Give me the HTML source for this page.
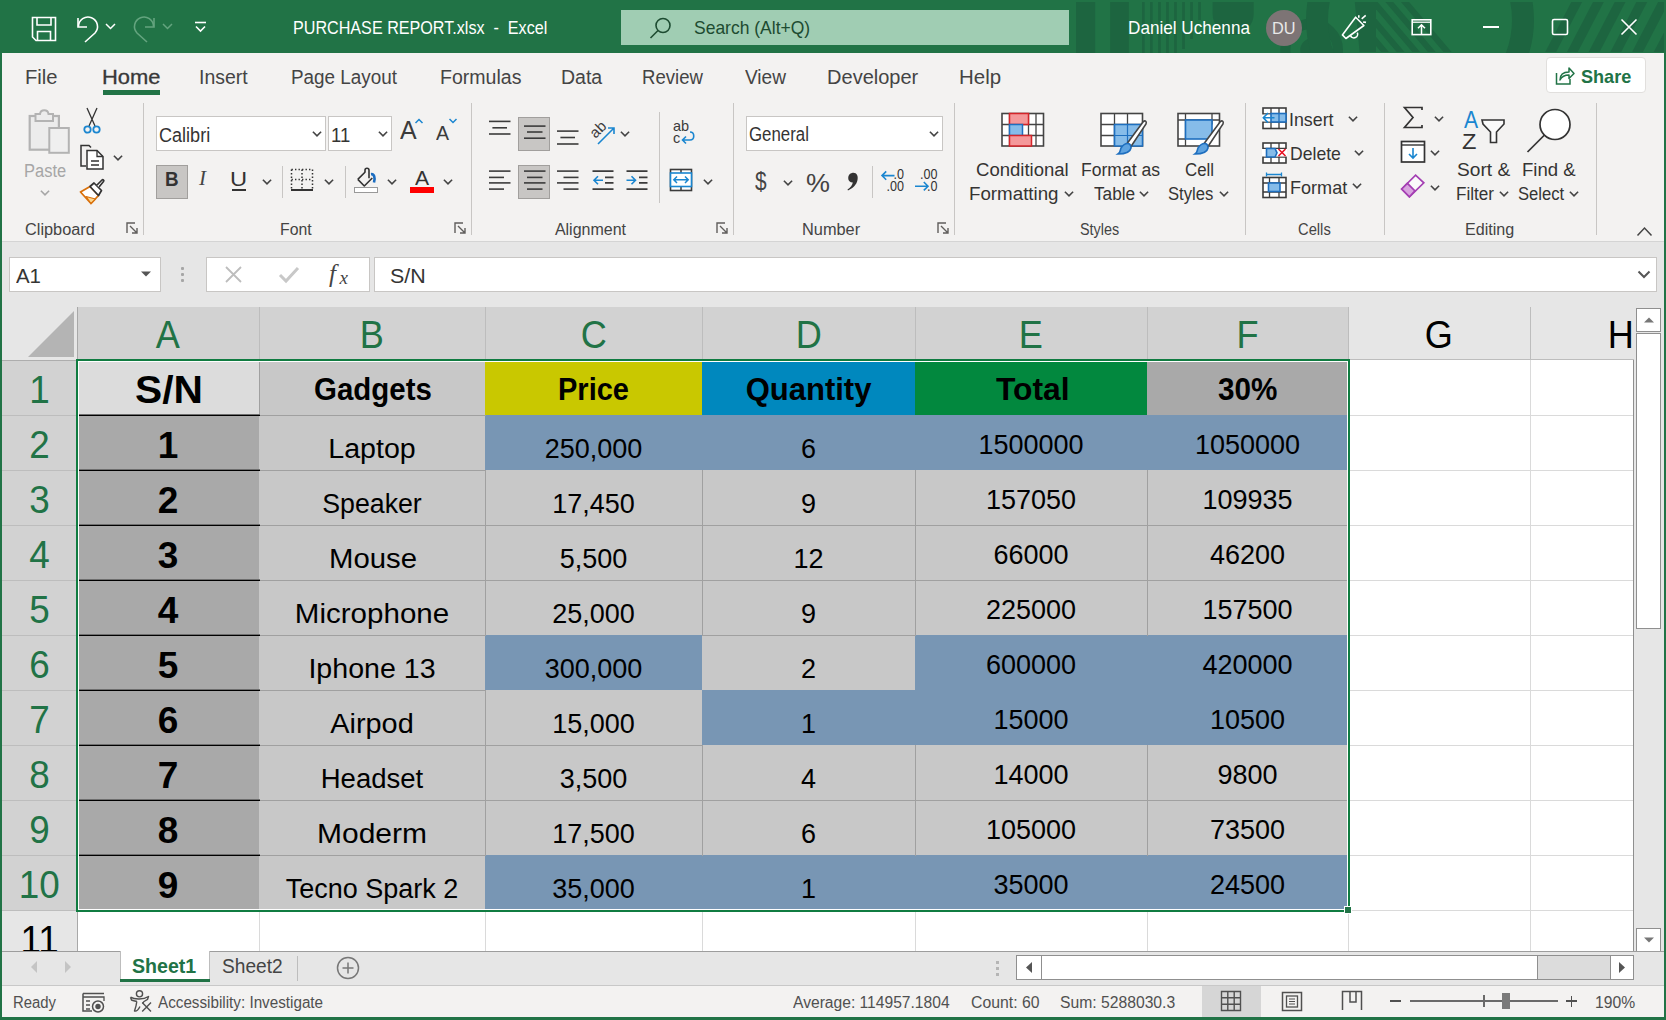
<!DOCTYPE html><html><head><meta charset="utf-8"><style>
*{margin:0;padding:0;box-sizing:border-box}
html,body{width:1666px;height:1020px;overflow:hidden;background:#f3f2f1;font-family:"Liberation Sans",sans-serif;color:#262626}
.ab{position:absolute}
.t{position:absolute;white-space:nowrap;line-height:1}
svg{position:absolute;overflow:visible}
</style></head><body>

<div class="ab" style="left:0;top:0;width:1666px;height:53px;background:#217346"></div>
<div class="ab" style="left:0;top:0;width:2px;height:1020px;background:#217346"></div>
<div class="ab" style="left:1664px;top:0;width:2px;height:1020px;background:#217346"></div>
<div class="ab" style="left:0;top:1017px;width:1666px;height:3px;background:#217346"></div>
<div class="ab" style="left:2px;top:241px;width:1662px;height:66px;background:#e6e6e6;border-top:1px solid #d4d4d4"></div>
<div style="position:absolute;left:0;top:0;width:1634px;height:951px;overflow:hidden">
<div class="ab" style="left:2px;top:307px;width:1634px;height:644px;background:#fff"></div>
<div class="ab" style="left:2px;top:307px;width:75px;height:53px;background:#e6e6e6"></div>
<svg style="left:0;top:0" width="1666" height="1020"><polygon points="28,357 74,311 74,357" fill="#b4b4b4"/></svg>
<div class="ab" style="left:259px;top:307px;width:1px;height:644px;background:#dadada"></div>
<div class="ab" style="left:485px;top:307px;width:1px;height:644px;background:#dadada"></div>
<div class="ab" style="left:702px;top:307px;width:1px;height:644px;background:#dadada"></div>
<div class="ab" style="left:915px;top:307px;width:1px;height:644px;background:#dadada"></div>
<div class="ab" style="left:1147px;top:307px;width:1px;height:644px;background:#dadada"></div>
<div class="ab" style="left:1348px;top:307px;width:1px;height:644px;background:#dadada"></div>
<div class="ab" style="left:1530px;top:307px;width:1px;height:644px;background:#dadada"></div>
<div class="ab" style="left:77px;top:415px;width:1557px;height:1px;background:#dadada"></div>
<div class="ab" style="left:77px;top:470px;width:1557px;height:1px;background:#dadada"></div>
<div class="ab" style="left:77px;top:525px;width:1557px;height:1px;background:#dadada"></div>
<div class="ab" style="left:77px;top:580px;width:1557px;height:1px;background:#dadada"></div>
<div class="ab" style="left:77px;top:635px;width:1557px;height:1px;background:#dadada"></div>
<div class="ab" style="left:77px;top:690px;width:1557px;height:1px;background:#dadada"></div>
<div class="ab" style="left:77px;top:745px;width:1557px;height:1px;background:#dadada"></div>
<div class="ab" style="left:77px;top:800px;width:1557px;height:1px;background:#dadada"></div>
<div class="ab" style="left:77px;top:855px;width:1557px;height:1px;background:#dadada"></div>
<div class="ab" style="left:77px;top:910px;width:1557px;height:1px;background:#dadada"></div>
<div class="ab" style="left:78px;top:307px;width:181px;height:53px;background:#d2d2d2"></div>
<div class="ab" style="left:259px;top:307px;width:1px;height:53px;background:#bdbdbd"></div>
<div class="t" style="left:77px;top:307px;width:182px;height:53px;line-height:57px;text-align:center;font-size:38px;color:#217346"><span style="display:inline-block;transform:scaleX(0.95)">A</span></div>
<div class="ab" style="left:260px;top:307px;width:225px;height:53px;background:#d2d2d2"></div>
<div class="ab" style="left:485px;top:307px;width:1px;height:53px;background:#bdbdbd"></div>
<div class="t" style="left:259px;top:307px;width:226px;height:53px;line-height:57px;text-align:center;font-size:38px;color:#217346"><span style="display:inline-block;transform:scaleX(0.95)">B</span></div>
<div class="ab" style="left:486px;top:307px;width:216px;height:53px;background:#d2d2d2"></div>
<div class="ab" style="left:702px;top:307px;width:1px;height:53px;background:#bdbdbd"></div>
<div class="t" style="left:485px;top:307px;width:217px;height:53px;line-height:57px;text-align:center;font-size:38px;color:#217346"><span style="display:inline-block;transform:scaleX(0.95)">C</span></div>
<div class="ab" style="left:703px;top:307px;width:212px;height:53px;background:#d2d2d2"></div>
<div class="ab" style="left:915px;top:307px;width:1px;height:53px;background:#bdbdbd"></div>
<div class="t" style="left:702px;top:307px;width:213px;height:53px;line-height:57px;text-align:center;font-size:38px;color:#217346"><span style="display:inline-block;transform:scaleX(0.95)">D</span></div>
<div class="ab" style="left:916px;top:307px;width:231px;height:53px;background:#d2d2d2"></div>
<div class="ab" style="left:1147px;top:307px;width:1px;height:53px;background:#bdbdbd"></div>
<div class="t" style="left:915px;top:307px;width:232px;height:53px;line-height:57px;text-align:center;font-size:38px;color:#217346"><span style="display:inline-block;transform:scaleX(0.95)">E</span></div>
<div class="ab" style="left:1148px;top:307px;width:200px;height:53px;background:#d2d2d2"></div>
<div class="ab" style="left:1348px;top:307px;width:1px;height:53px;background:#bdbdbd"></div>
<div class="t" style="left:1147px;top:307px;width:201px;height:53px;line-height:57px;text-align:center;font-size:38px;color:#217346"><span style="display:inline-block;transform:scaleX(0.95)">F</span></div>
<div class="ab" style="left:1349px;top:307px;width:181px;height:53px;background:#e6e6e6"></div>
<div class="ab" style="left:1530px;top:307px;width:1px;height:53px;background:#bdbdbd"></div>
<div class="t" style="left:1348px;top:307px;width:182px;height:53px;line-height:57px;text-align:center;font-size:38px;color:#000"><span style="display:inline-block;transform:scaleX(0.95)">G</span></div>
<div class="ab" style="left:1531px;top:307px;width:181px;height:53px;background:#e6e6e6"></div>
<div class="ab" style="left:1712px;top:307px;width:1px;height:53px;background:#bdbdbd"></div>
<div class="t" style="left:1530px;top:307px;width:182px;height:53px;line-height:57px;text-align:center;font-size:38px;color:#000"><span style="display:inline-block;transform:scaleX(0.95)">H</span></div>
<div class="ab" style="left:77px;top:359px;width:1557px;height:1px;background:#bdbdbd"></div>
<div class="ab" style="left:2px;top:361px;width:75px;height:54px;background:#d2d2d2"></div>
<div class="ab" style="left:2px;top:415px;width:75px;height:1px;background:#bdbdbd"></div>
<div class="t" style="left:2px;top:360px;width:75px;height:55px;line-height:61px;text-align:center;font-size:38px;color:#217346"><span style="display:inline-block;transform:scaleX(0.97)">1</span></div>
<div class="ab" style="left:2px;top:416px;width:75px;height:54px;background:#d2d2d2"></div>
<div class="ab" style="left:2px;top:470px;width:75px;height:1px;background:#bdbdbd"></div>
<div class="t" style="left:2px;top:415px;width:75px;height:55px;line-height:61px;text-align:center;font-size:38px;color:#217346"><span style="display:inline-block;transform:scaleX(0.97)">2</span></div>
<div class="ab" style="left:2px;top:471px;width:75px;height:54px;background:#d2d2d2"></div>
<div class="ab" style="left:2px;top:525px;width:75px;height:1px;background:#bdbdbd"></div>
<div class="t" style="left:2px;top:470px;width:75px;height:55px;line-height:61px;text-align:center;font-size:38px;color:#217346"><span style="display:inline-block;transform:scaleX(0.97)">3</span></div>
<div class="ab" style="left:2px;top:526px;width:75px;height:54px;background:#d2d2d2"></div>
<div class="ab" style="left:2px;top:580px;width:75px;height:1px;background:#bdbdbd"></div>
<div class="t" style="left:2px;top:525px;width:75px;height:55px;line-height:61px;text-align:center;font-size:38px;color:#217346"><span style="display:inline-block;transform:scaleX(0.97)">4</span></div>
<div class="ab" style="left:2px;top:581px;width:75px;height:54px;background:#d2d2d2"></div>
<div class="ab" style="left:2px;top:635px;width:75px;height:1px;background:#bdbdbd"></div>
<div class="t" style="left:2px;top:580px;width:75px;height:55px;line-height:61px;text-align:center;font-size:38px;color:#217346"><span style="display:inline-block;transform:scaleX(0.97)">5</span></div>
<div class="ab" style="left:2px;top:636px;width:75px;height:54px;background:#d2d2d2"></div>
<div class="ab" style="left:2px;top:690px;width:75px;height:1px;background:#bdbdbd"></div>
<div class="t" style="left:2px;top:635px;width:75px;height:55px;line-height:61px;text-align:center;font-size:38px;color:#217346"><span style="display:inline-block;transform:scaleX(0.97)">6</span></div>
<div class="ab" style="left:2px;top:691px;width:75px;height:54px;background:#d2d2d2"></div>
<div class="ab" style="left:2px;top:745px;width:75px;height:1px;background:#bdbdbd"></div>
<div class="t" style="left:2px;top:690px;width:75px;height:55px;line-height:61px;text-align:center;font-size:38px;color:#217346"><span style="display:inline-block;transform:scaleX(0.97)">7</span></div>
<div class="ab" style="left:2px;top:746px;width:75px;height:54px;background:#d2d2d2"></div>
<div class="ab" style="left:2px;top:800px;width:75px;height:1px;background:#bdbdbd"></div>
<div class="t" style="left:2px;top:745px;width:75px;height:55px;line-height:61px;text-align:center;font-size:38px;color:#217346"><span style="display:inline-block;transform:scaleX(0.97)">8</span></div>
<div class="ab" style="left:2px;top:801px;width:75px;height:54px;background:#d2d2d2"></div>
<div class="ab" style="left:2px;top:855px;width:75px;height:1px;background:#bdbdbd"></div>
<div class="t" style="left:2px;top:800px;width:75px;height:55px;line-height:61px;text-align:center;font-size:38px;color:#217346"><span style="display:inline-block;transform:scaleX(0.97)">9</span></div>
<div class="ab" style="left:2px;top:856px;width:75px;height:54px;background:#d2d2d2"></div>
<div class="ab" style="left:2px;top:910px;width:75px;height:1px;background:#bdbdbd"></div>
<div class="t" style="left:2px;top:855px;width:75px;height:55px;line-height:61px;text-align:center;font-size:38px;color:#217346"><span style="display:inline-block;transform:scaleX(0.97)">10</span></div>
<div class="ab" style="left:2px;top:911px;width:75px;height:40px;background:#e6e6e6"></div>
<div class="ab" style="left:2px;top:965px;width:75px;height:1px;background:#bdbdbd"></div>
<div class="t" style="left:2px;top:910px;width:75px;height:55px;line-height:61px;text-align:center;font-size:38px;color:#000"><span style="display:inline-block;transform:scaleX(0.97)">11</span></div>
<div class="ab" style="left:77px;top:307px;width:1px;height:644px;background:#a8a8a8"></div>
<div class="ab" style="left:2px;top:360px;width:75px;height:1px;background:#adadad"></div>
<div class="ab" style="left:77px;top:360px;width:183px;height:56px;background:#dcdcdc"></div>
<div class="ab" style="left:259px;top:360px;width:227px;height:56px;background:#c8c8c8"></div>
<div class="ab" style="left:485px;top:360px;width:218px;height:56px;background:#c9c800"></div>
<div class="ab" style="left:702px;top:360px;width:214px;height:56px;background:#0088be"></div>
<div class="ab" style="left:915px;top:360px;width:233px;height:56px;background:#02883e"></div>
<div class="ab" style="left:1147px;top:360px;width:202px;height:56px;background:#a9a9a9"></div>
<div class="ab" style="left:77px;top:415px;width:183px;height:56px;background:#a9a9a9"></div>
<div class="ab" style="left:259px;top:415px;width:227px;height:56px;background:#c8c8c8"></div>
<div class="ab" style="left:485px;top:415px;width:218px;height:56px;background:#7896b4"></div>
<div class="ab" style="left:702px;top:415px;width:214px;height:56px;background:#7896b4"></div>
<div class="ab" style="left:915px;top:415px;width:233px;height:56px;background:#7896b4"></div>
<div class="ab" style="left:1147px;top:415px;width:202px;height:56px;background:#7896b4"></div>
<div class="ab" style="left:77px;top:470px;width:183px;height:56px;background:#a9a9a9"></div>
<div class="ab" style="left:259px;top:470px;width:227px;height:56px;background:#c8c8c8"></div>
<div class="ab" style="left:485px;top:470px;width:218px;height:56px;background:#c8c8c8"></div>
<div class="ab" style="left:702px;top:470px;width:214px;height:56px;background:#c8c8c8"></div>
<div class="ab" style="left:915px;top:470px;width:233px;height:56px;background:#c8c8c8"></div>
<div class="ab" style="left:1147px;top:470px;width:202px;height:56px;background:#c8c8c8"></div>
<div class="ab" style="left:77px;top:525px;width:183px;height:56px;background:#a9a9a9"></div>
<div class="ab" style="left:259px;top:525px;width:227px;height:56px;background:#c8c8c8"></div>
<div class="ab" style="left:485px;top:525px;width:218px;height:56px;background:#c8c8c8"></div>
<div class="ab" style="left:702px;top:525px;width:214px;height:56px;background:#c8c8c8"></div>
<div class="ab" style="left:915px;top:525px;width:233px;height:56px;background:#c8c8c8"></div>
<div class="ab" style="left:1147px;top:525px;width:202px;height:56px;background:#c8c8c8"></div>
<div class="ab" style="left:77px;top:580px;width:183px;height:56px;background:#a9a9a9"></div>
<div class="ab" style="left:259px;top:580px;width:227px;height:56px;background:#c8c8c8"></div>
<div class="ab" style="left:485px;top:580px;width:218px;height:56px;background:#c8c8c8"></div>
<div class="ab" style="left:702px;top:580px;width:214px;height:56px;background:#c8c8c8"></div>
<div class="ab" style="left:915px;top:580px;width:233px;height:56px;background:#c8c8c8"></div>
<div class="ab" style="left:1147px;top:580px;width:202px;height:56px;background:#c8c8c8"></div>
<div class="ab" style="left:77px;top:635px;width:183px;height:56px;background:#a9a9a9"></div>
<div class="ab" style="left:259px;top:635px;width:227px;height:56px;background:#c8c8c8"></div>
<div class="ab" style="left:485px;top:635px;width:218px;height:56px;background:#7896b4"></div>
<div class="ab" style="left:702px;top:635px;width:214px;height:56px;background:#c8c8c8"></div>
<div class="ab" style="left:915px;top:635px;width:233px;height:56px;background:#7896b4"></div>
<div class="ab" style="left:1147px;top:635px;width:202px;height:56px;background:#7896b4"></div>
<div class="ab" style="left:77px;top:690px;width:183px;height:56px;background:#a9a9a9"></div>
<div class="ab" style="left:259px;top:690px;width:227px;height:56px;background:#c8c8c8"></div>
<div class="ab" style="left:485px;top:690px;width:218px;height:56px;background:#c8c8c8"></div>
<div class="ab" style="left:702px;top:690px;width:214px;height:56px;background:#7896b4"></div>
<div class="ab" style="left:915px;top:690px;width:233px;height:56px;background:#7896b4"></div>
<div class="ab" style="left:1147px;top:690px;width:202px;height:56px;background:#7896b4"></div>
<div class="ab" style="left:77px;top:745px;width:183px;height:56px;background:#a9a9a9"></div>
<div class="ab" style="left:259px;top:745px;width:227px;height:56px;background:#c8c8c8"></div>
<div class="ab" style="left:485px;top:745px;width:218px;height:56px;background:#c8c8c8"></div>
<div class="ab" style="left:702px;top:745px;width:214px;height:56px;background:#c8c8c8"></div>
<div class="ab" style="left:915px;top:745px;width:233px;height:56px;background:#c8c8c8"></div>
<div class="ab" style="left:1147px;top:745px;width:202px;height:56px;background:#c8c8c8"></div>
<div class="ab" style="left:77px;top:800px;width:183px;height:56px;background:#a9a9a9"></div>
<div class="ab" style="left:259px;top:800px;width:227px;height:56px;background:#c8c8c8"></div>
<div class="ab" style="left:485px;top:800px;width:218px;height:56px;background:#c8c8c8"></div>
<div class="ab" style="left:702px;top:800px;width:214px;height:56px;background:#c8c8c8"></div>
<div class="ab" style="left:915px;top:800px;width:233px;height:56px;background:#c8c8c8"></div>
<div class="ab" style="left:1147px;top:800px;width:202px;height:56px;background:#c8c8c8"></div>
<div class="ab" style="left:77px;top:855px;width:183px;height:56px;background:#a9a9a9"></div>
<div class="ab" style="left:259px;top:855px;width:227px;height:56px;background:#c8c8c8"></div>
<div class="ab" style="left:485px;top:855px;width:218px;height:56px;background:#7896b4"></div>
<div class="ab" style="left:702px;top:855px;width:214px;height:56px;background:#7896b4"></div>
<div class="ab" style="left:915px;top:855px;width:233px;height:56px;background:#7896b4"></div>
<div class="ab" style="left:1147px;top:855px;width:202px;height:56px;background:#7896b4"></div>
<div class="ab" style="left:259px;top:415px;width:227px;height:1px;background:#a0a0a0"></div>
<div class="ab" style="left:259px;top:470px;width:227px;height:1px;background:#a0a0a0"></div>
<div class="ab" style="left:485px;top:470px;width:1px;height:56px;background:#a0a0a0"></div>
<div class="ab" style="left:259px;top:525px;width:227px;height:1px;background:#a0a0a0"></div>
<div class="ab" style="left:702px;top:470px;width:1px;height:56px;background:#a0a0a0"></div>
<div class="ab" style="left:485px;top:525px;width:218px;height:1px;background:#a0a0a0"></div>
<div class="ab" style="left:915px;top:470px;width:1px;height:56px;background:#a0a0a0"></div>
<div class="ab" style="left:702px;top:525px;width:214px;height:1px;background:#a0a0a0"></div>
<div class="ab" style="left:1147px;top:470px;width:1px;height:56px;background:#a0a0a0"></div>
<div class="ab" style="left:915px;top:525px;width:233px;height:1px;background:#a0a0a0"></div>
<div class="ab" style="left:1147px;top:525px;width:202px;height:1px;background:#a0a0a0"></div>
<div class="ab" style="left:485px;top:525px;width:1px;height:56px;background:#a0a0a0"></div>
<div class="ab" style="left:259px;top:580px;width:227px;height:1px;background:#a0a0a0"></div>
<div class="ab" style="left:702px;top:525px;width:1px;height:56px;background:#a0a0a0"></div>
<div class="ab" style="left:485px;top:580px;width:218px;height:1px;background:#a0a0a0"></div>
<div class="ab" style="left:915px;top:525px;width:1px;height:56px;background:#a0a0a0"></div>
<div class="ab" style="left:702px;top:580px;width:214px;height:1px;background:#a0a0a0"></div>
<div class="ab" style="left:1147px;top:525px;width:1px;height:56px;background:#a0a0a0"></div>
<div class="ab" style="left:915px;top:580px;width:233px;height:1px;background:#a0a0a0"></div>
<div class="ab" style="left:1147px;top:580px;width:202px;height:1px;background:#a0a0a0"></div>
<div class="ab" style="left:485px;top:580px;width:1px;height:56px;background:#a0a0a0"></div>
<div class="ab" style="left:259px;top:635px;width:227px;height:1px;background:#a0a0a0"></div>
<div class="ab" style="left:702px;top:580px;width:1px;height:56px;background:#a0a0a0"></div>
<div class="ab" style="left:915px;top:580px;width:1px;height:56px;background:#a0a0a0"></div>
<div class="ab" style="left:702px;top:635px;width:214px;height:1px;background:#a0a0a0"></div>
<div class="ab" style="left:1147px;top:580px;width:1px;height:56px;background:#a0a0a0"></div>
<div class="ab" style="left:259px;top:690px;width:227px;height:1px;background:#a0a0a0"></div>
<div class="ab" style="left:485px;top:690px;width:1px;height:56px;background:#a0a0a0"></div>
<div class="ab" style="left:259px;top:745px;width:227px;height:1px;background:#a0a0a0"></div>
<div class="ab" style="left:485px;top:745px;width:218px;height:1px;background:#a0a0a0"></div>
<div class="ab" style="left:485px;top:745px;width:1px;height:56px;background:#a0a0a0"></div>
<div class="ab" style="left:259px;top:800px;width:227px;height:1px;background:#a0a0a0"></div>
<div class="ab" style="left:702px;top:745px;width:1px;height:56px;background:#a0a0a0"></div>
<div class="ab" style="left:485px;top:800px;width:218px;height:1px;background:#a0a0a0"></div>
<div class="ab" style="left:915px;top:745px;width:1px;height:56px;background:#a0a0a0"></div>
<div class="ab" style="left:702px;top:800px;width:214px;height:1px;background:#a0a0a0"></div>
<div class="ab" style="left:1147px;top:745px;width:1px;height:56px;background:#a0a0a0"></div>
<div class="ab" style="left:915px;top:800px;width:233px;height:1px;background:#a0a0a0"></div>
<div class="ab" style="left:1147px;top:800px;width:202px;height:1px;background:#a0a0a0"></div>
<div class="ab" style="left:485px;top:800px;width:1px;height:56px;background:#a0a0a0"></div>
<div class="ab" style="left:259px;top:855px;width:227px;height:1px;background:#a0a0a0"></div>
<div class="ab" style="left:702px;top:800px;width:1px;height:56px;background:#a0a0a0"></div>
<div class="ab" style="left:915px;top:800px;width:1px;height:56px;background:#a0a0a0"></div>
<div class="ab" style="left:1147px;top:800px;width:1px;height:56px;background:#a0a0a0"></div>
<div class="ab" style="left:259px;top:361px;width:1px;height:54px;background:#a0a0a0"></div>
<div class="ab" style="left:77px;top:414px;width:183px;height:1px;background:#6e6e6e"></div>
<div class="ab" style="left:77px;top:415px;width:183px;height:1px;background:#000"></div>
<div class="ab" style="left:77px;top:469px;width:183px;height:1px;background:#6e6e6e"></div>
<div class="ab" style="left:77px;top:470px;width:183px;height:1px;background:#000"></div>
<div class="ab" style="left:77px;top:524px;width:183px;height:1px;background:#6e6e6e"></div>
<div class="ab" style="left:77px;top:525px;width:183px;height:1px;background:#000"></div>
<div class="ab" style="left:77px;top:579px;width:183px;height:1px;background:#6e6e6e"></div>
<div class="ab" style="left:77px;top:580px;width:183px;height:1px;background:#000"></div>
<div class="ab" style="left:77px;top:634px;width:183px;height:1px;background:#6e6e6e"></div>
<div class="ab" style="left:77px;top:635px;width:183px;height:1px;background:#000"></div>
<div class="ab" style="left:77px;top:689px;width:183px;height:1px;background:#6e6e6e"></div>
<div class="ab" style="left:77px;top:690px;width:183px;height:1px;background:#000"></div>
<div class="ab" style="left:77px;top:744px;width:183px;height:1px;background:#6e6e6e"></div>
<div class="ab" style="left:77px;top:745px;width:183px;height:1px;background:#000"></div>
<div class="ab" style="left:77px;top:799px;width:183px;height:1px;background:#6e6e6e"></div>
<div class="ab" style="left:77px;top:800px;width:183px;height:1px;background:#000"></div>
<div class="ab" style="left:77px;top:854px;width:183px;height:1px;background:#6e6e6e"></div>
<div class="ab" style="left:77px;top:855px;width:183px;height:1px;background:#000"></div>
<div class="t" style="left:135.32px;top:371.33px;font-size:38px;color:#000;font-weight:bold;transform:scaleX(1.0720);transform-origin:0 0;">S/N</div>
<div class="t" style="left:313.51px;top:373.65px;font-size:31px;color:#000;font-weight:bold;transform:scaleX(0.9506);transform-origin:0 0;">Gadgets</div>
<div class="t" style="left:558.04px;top:373.65px;font-size:31px;color:#000;font-weight:bold;transform:scaleX(0.9354);transform-origin:0 0;">Price</div>
<div class="t" style="left:745.70px;top:373.65px;font-size:31px;color:#000;font-weight:bold;">Quantity</div>
<div class="t" style="left:995.69px;top:373.65px;font-size:31px;color:#000;font-weight:bold;transform:scaleX(1.0260);transform-origin:0 0;">Total</div>
<div class="t" style="left:1218.33px;top:373.65px;font-size:31px;color:#000;font-weight:bold;transform:scaleX(0.9571);transform-origin:0 0;">30%</div>
<div class="t" style="left:77px;top:415px;width:182px;height:55px;text-align:center;font-weight:bold;font-size:37px;line-height:61px;color:#000">1</div>
<div class="t" style="left:259px;top:415px;width:226px;height:55px;text-align:center;font-size:27px;line-height:69px;color:#000;transform:scaleX(1.059)">Laptop</div>
<div class="t" style="left:485px;top:415px;width:217px;height:55px;text-align:center;font-size:27px;line-height:69px;color:#000">250,000</div>
<div class="t" style="left:702px;top:415px;width:213px;height:55px;text-align:center;font-size:27px;line-height:69px;color:#000">6</div>
<div class="t" style="left:915px;top:415px;width:232px;height:55px;text-align:center;font-size:27px;line-height:60px;color:#000">1500000</div>
<div class="t" style="left:1147px;top:415px;width:201px;height:55px;text-align:center;font-size:27px;line-height:60px;color:#000">1050000</div>
<div class="t" style="left:77px;top:470px;width:182px;height:55px;text-align:center;font-weight:bold;font-size:37px;line-height:61px;color:#000">2</div>
<div class="t" style="left:259px;top:470px;width:226px;height:55px;text-align:center;font-size:27px;line-height:69px;color:#000;transform:scaleX(0.99)">Speaker</div>
<div class="t" style="left:485px;top:470px;width:217px;height:55px;text-align:center;font-size:27px;line-height:69px;color:#000">17,450</div>
<div class="t" style="left:702px;top:470px;width:213px;height:55px;text-align:center;font-size:27px;line-height:69px;color:#000">9</div>
<div class="t" style="left:915px;top:470px;width:232px;height:55px;text-align:center;font-size:27px;line-height:60px;color:#000">157050</div>
<div class="t" style="left:1147px;top:470px;width:201px;height:55px;text-align:center;font-size:27px;line-height:60px;color:#000">109935</div>
<div class="t" style="left:77px;top:525px;width:182px;height:55px;text-align:center;font-weight:bold;font-size:37px;line-height:61px;color:#000">3</div>
<div class="t" style="left:259.5px;top:525px;width:226px;height:55px;text-align:center;font-size:27px;line-height:69px;color:#000;transform:scaleX(1.087)">Mouse</div>
<div class="t" style="left:485px;top:525px;width:217px;height:55px;text-align:center;font-size:27px;line-height:69px;color:#000">5,500</div>
<div class="t" style="left:702px;top:525px;width:213px;height:55px;text-align:center;font-size:27px;line-height:69px;color:#000">12</div>
<div class="t" style="left:915px;top:525px;width:232px;height:55px;text-align:center;font-size:27px;line-height:60px;color:#000">66000</div>
<div class="t" style="left:1147px;top:525px;width:201px;height:55px;text-align:center;font-size:27px;line-height:60px;color:#000">46200</div>
<div class="t" style="left:77px;top:580px;width:182px;height:55px;text-align:center;font-weight:bold;font-size:37px;line-height:61px;color:#000">4</div>
<div class="t" style="left:258.5px;top:580px;width:226px;height:55px;text-align:center;font-size:27px;line-height:69px;color:#000;transform:scaleX(1.094)">Microphone</div>
<div class="t" style="left:485px;top:580px;width:217px;height:55px;text-align:center;font-size:27px;line-height:69px;color:#000">25,000</div>
<div class="t" style="left:702px;top:580px;width:213px;height:55px;text-align:center;font-size:27px;line-height:69px;color:#000">9</div>
<div class="t" style="left:915px;top:580px;width:232px;height:55px;text-align:center;font-size:27px;line-height:60px;color:#000">225000</div>
<div class="t" style="left:1147px;top:580px;width:201px;height:55px;text-align:center;font-size:27px;line-height:60px;color:#000">157500</div>
<div class="t" style="left:77px;top:635px;width:182px;height:55px;text-align:center;font-weight:bold;font-size:37px;line-height:61px;color:#000">5</div>
<div class="t" style="left:259px;top:635px;width:226px;height:55px;text-align:center;font-size:27px;line-height:69px;color:#000;transform:scaleX(1.059)">Iphone 13</div>
<div class="t" style="left:485px;top:635px;width:217px;height:55px;text-align:center;font-size:27px;line-height:69px;color:#000">300,000</div>
<div class="t" style="left:702px;top:635px;width:213px;height:55px;text-align:center;font-size:27px;line-height:69px;color:#000">2</div>
<div class="t" style="left:915px;top:635px;width:232px;height:55px;text-align:center;font-size:27px;line-height:60px;color:#000">600000</div>
<div class="t" style="left:1147px;top:635px;width:201px;height:55px;text-align:center;font-size:27px;line-height:60px;color:#000">420000</div>
<div class="t" style="left:77px;top:690px;width:182px;height:55px;text-align:center;font-weight:bold;font-size:37px;line-height:61px;color:#000">6</div>
<div class="t" style="left:259px;top:690px;width:226px;height:55px;text-align:center;font-size:27px;line-height:69px;color:#000;transform:scaleX(1.07)">Airpod</div>
<div class="t" style="left:485px;top:690px;width:217px;height:55px;text-align:center;font-size:27px;line-height:69px;color:#000">15,000</div>
<div class="t" style="left:702px;top:690px;width:213px;height:55px;text-align:center;font-size:27px;line-height:69px;color:#000">1</div>
<div class="t" style="left:915px;top:690px;width:232px;height:55px;text-align:center;font-size:27px;line-height:60px;color:#000">15000</div>
<div class="t" style="left:1147px;top:690px;width:201px;height:55px;text-align:center;font-size:27px;line-height:60px;color:#000">10500</div>
<div class="t" style="left:77px;top:745px;width:182px;height:55px;text-align:center;font-weight:bold;font-size:37px;line-height:61px;color:#000">7</div>
<div class="t" style="left:259px;top:745px;width:226px;height:55px;text-align:center;font-size:27px;line-height:69px;color:#000;transform:scaleX(1.02)">Headset</div>
<div class="t" style="left:485px;top:745px;width:217px;height:55px;text-align:center;font-size:27px;line-height:69px;color:#000">3,500</div>
<div class="t" style="left:702px;top:745px;width:213px;height:55px;text-align:center;font-size:27px;line-height:69px;color:#000">4</div>
<div class="t" style="left:915px;top:745px;width:232px;height:55px;text-align:center;font-size:27px;line-height:60px;color:#000">14000</div>
<div class="t" style="left:1147px;top:745px;width:201px;height:55px;text-align:center;font-size:27px;line-height:60px;color:#000">9800</div>
<div class="t" style="left:77px;top:800px;width:182px;height:55px;text-align:center;font-weight:bold;font-size:37px;line-height:61px;color:#000">8</div>
<div class="t" style="left:258.5px;top:800px;width:226px;height:55px;text-align:center;font-size:27px;line-height:69px;color:#000;transform:scaleX(1.11)">Moderm</div>
<div class="t" style="left:485px;top:800px;width:217px;height:55px;text-align:center;font-size:27px;line-height:69px;color:#000">17,500</div>
<div class="t" style="left:702px;top:800px;width:213px;height:55px;text-align:center;font-size:27px;line-height:69px;color:#000">6</div>
<div class="t" style="left:915px;top:800px;width:232px;height:55px;text-align:center;font-size:27px;line-height:60px;color:#000">105000</div>
<div class="t" style="left:1147px;top:800px;width:201px;height:55px;text-align:center;font-size:27px;line-height:60px;color:#000">73500</div>
<div class="t" style="left:77px;top:855px;width:182px;height:55px;text-align:center;font-weight:bold;font-size:37px;line-height:61px;color:#000">9</div>
<div class="t" style="left:259px;top:855px;width:226px;height:55px;text-align:center;font-size:27px;line-height:69px;color:#000">Tecno Spark 2</div>
<div class="t" style="left:485px;top:855px;width:217px;height:55px;text-align:center;font-size:27px;line-height:69px;color:#000">35,000</div>
<div class="t" style="left:702px;top:855px;width:213px;height:55px;text-align:center;font-size:27px;line-height:69px;color:#000">1</div>
<div class="t" style="left:915px;top:855px;width:232px;height:55px;text-align:center;font-size:27px;line-height:60px;color:#000">35000</div>
<div class="t" style="left:1147px;top:855px;width:201px;height:55px;text-align:center;font-size:27px;line-height:60px;color:#000">24500</div>
<div class="ab" style="left:76px;top:359px;width:1274px;height:553px;border:2px solid #107c41"></div>
<div class="ab" style="left:78px;top:361px;width:1270px;height:549px;border:1px solid #fff"></div>
<div class="ab" style="left:1344px;top:906px;width:8px;height:8px;background:#217346;border:1px solid #fff"></div>
</div>
<div class="ab" style="left:1634px;top:307px;width:2px;height:644px;background:#e6e6e6"></div>
<div class="ab" style="left:1633px;top:360px;width:1px;height:591px;background:#8f8f8f"></div>
<svg style="left:0;top:0" width="1666" height="53"><defs><clipPath id="tb"><rect x="1060" y="2" width="604" height="51"/></clipPath><clipPath id="dz"><polygon points="1354.8,2 1409.1,2 1451.6,52 1359.6,52"/></clipPath><clipPath id="dx"><rect x="1376" y="0" width="100" height="53"/></clipPath></defs><g clip-path="url(#tb)" fill="#1d6540">
<rect x="1076" y="2" width="19.2" height="51"/>
<rect x="1110.2" y="2" width="18.6" height="51"/>
<rect x="1142.0" y="2" width="2.7" height="51"/>
<rect x="1150.0" y="2" width="2.7" height="51"/>
<rect x="1158.1" y="2" width="2.7" height="51"/>
<rect x="1166.1" y="2" width="2.7" height="51"/>
<rect x="1174.1" y="2" width="2.7" height="51"/>
<rect x="1182.2" y="2" width="2.7" height="47"/>
<rect x="1190.2" y="2" width="2.7" height="37"/>
<rect x="1198.2" y="2" width="2.7" height="18"/>
<path d="M1212.6 2 H1253.7 V14 A20.55 20.55 0 0 1 1212.6 14 Z"/>
<circle cx="1311.6" cy="50" r="26.3" fill="none" stroke="#1d6540" stroke-width="10.2"/>
<circle cx="1311.6" cy="50" r="11.4"/>
<g clip-path="url(#dz)"><rect x="1350" y="0" width="110" height="53"/><g clip-path="url(#dx)" fill="#217346">
<polygon points="1330.8,2 1338.6,2 1381.1,52 1373.3,52"/>
<polygon points="1346.4,2 1354.2,2 1396.7,52 1388.9,52"/>
<polygon points="1362,2 1369.8,2 1412.3,52 1404.5,52"/>
<polygon points="1377.6,2 1385.3999999999999,2 1427.8999999999999,52 1420.1,52"/>
<polygon points="1393.2,2 1401.0,2 1443.5,52 1435.7,52"/>
</g></g>
<circle cx="1420" cy="20" r="103" fill="none" stroke="#1d6540" stroke-width="22"/>
<polygon points="1571.3,2 1582.1,2 1556.1,52 1545.3,52"/>
<polygon points="1593.0,2 1603.8,2 1577.8,52 1567.0,52"/>
<polygon points="1614.7,2 1625.5,2 1599.5,52 1588.7,52"/>
<polygon points="1636.4,2 1647.2,2 1621.2,52 1610.4,52"/>
<polygon points="1658.1,2 1668.9,2 1642.9,52 1632.1,52"/>
<polygon points="1679.8,2 1690.6,2 1664.6,52 1653.8,52"/>
</g></svg>
<svg style="left:30px;top:15px;" width="28" height="28" viewBox="0 0 28 28"><path d="M2.5 2.5 H25.5 V25.5 H6 L2.5 22 Z" fill="none" stroke="#ffffff" stroke-width="1.6"/><path d="M7 2.5 V10 H21 V2.5" fill="none" stroke="#ffffff" stroke-width="1.6"/><path d="M7.5 25.5 V16.5 H20.5 V25.5" fill="none" stroke="#ffffff" stroke-width="1.6"/></svg>
<svg style="left:74px;top:14px;" width="30" height="30" viewBox="0 0 30 30"><path d="M4 4 V13 H13" fill="none" stroke="#ffffff" stroke-width="1.6"/><path d="M4.5 12.5 A9.5 9.5 0 1 1 21 19 L11 28" fill="none" stroke="#ffffff" stroke-width="1.6"/></svg>
<svg style="left:105px;top:22px;" width="12" height="10" viewBox="0 0 12 10"><path d="M1 2 L5.5 6.5 L10 2" fill="none" stroke="#ffffff" stroke-width="1.5"/></svg>
<svg style="left:132px;top:14px;" width="30" height="30" viewBox="0 0 30 30"><path d="M22 4 V13 H13" fill="none" stroke="#64a47f" stroke-width="1.6"/><path d="M21.5 12.5 A9.5 9.5 0 1 0 5 19 L15 28" fill="none" stroke="#64a47f" stroke-width="1.6"/></svg>
<svg style="left:162px;top:22px;" width="12" height="10" viewBox="0 0 12 10"><path d="M1 2 L5.5 6.5 L10 2" fill="none" stroke="#64a47f" stroke-width="1.5"/></svg>
<svg style="left:194px;top:20px;" width="14" height="14" viewBox="0 0 14 14"><path d="M1 2.5 H12" stroke="#ffffff" stroke-width="1.6"/><path d="M2 6.5 L6.5 11 L11 6.5" fill="none" stroke="#ffffff" stroke-width="1.6"/></svg>
<div class="t" style="left:293.13px;top:17.91px;font-size:19px;color:#ffffff;transform:scaleX(0.8491);transform-origin:0 0;">PURCHASE REPORT.xlsx&nbsp;&nbsp;-&nbsp;&nbsp;Excel</div>
<div class="ab" style="left:621px;top:10px;width:448px;height:35px;background:#a0cdb3"></div>
<svg style="left:648px;top:16px;" width="26" height="26" viewBox="0 0 26 26"><circle cx="15" cy="9.5" r="7" fill="none" stroke="#1d4b31" stroke-width="1.6"/><path d="M10 14.5 L2.5 22" stroke="#1d4b31" stroke-width="1.6"/></svg>
<div class="t" style="left:694.17px;top:18.11px;font-size:19px;color:#1d4b31;transform:scaleX(0.9203);transform-origin:0 0;">Search (Alt+Q)</div>
<div class="t" style="left:1127.55px;top:17.91px;font-size:19px;color:#ffffff;transform:scaleX(0.9020);transform-origin:0 0;">Daniel Uchenna</div>
<div class="ab" style="left:1266px;top:9.5px;width:36px;height:36px;border-radius:50%;background:#7d7475"></div>
<div class="t" style="left:1272.16px;top:19.61px;font-size:17px;color:#e8e8e8;transform:scaleX(0.9589);transform-origin:0 0;">DU</div>
<svg style="left:1330px;top:5px;" width="50" height="45" viewBox="0 0 50 45"><path d="M12.4 29.9 L25.6 12.2 L33.9 20.5 L15.9 33.5 Z" fill="none" stroke="#ffffff" stroke-width="1.6" stroke-linejoin="round"/><path d="M20.5 30.6 A3.6 3.6 0 0 0 27.3 27.6" fill="none" stroke="#ffffff" stroke-width="1.6"/><path d="M28.8 10.2 V12.8 M31.7 13.8 L35.7 10.4 M33.1 17 L36 17.4" stroke="#ffffff" stroke-width="1.6"/></svg>
<svg style="left:1405px;top:13px;" width="32" height="28" viewBox="0 0 32 28"><rect x="7.2" y="6.8" width="18.6" height="14.8" fill="none" stroke="#ffffff" stroke-width="1.6"/><path d="M7.2 9.2 H25.8" stroke="#ffffff" stroke-width="1.3"/><path d="M16.5 21.2 V12.3 M13 15.3 L16.5 11.8 L20 15.3" fill="none" stroke="#ffffff" stroke-width="1.5"/></svg>
<div class="ab" style="left:1483px;top:26px;width:16px;height:1.5px;background:#fff"></div>
<svg style="left:1551px;top:18px;" width="18" height="18" viewBox="0 0 18 18"><rect x="1.5" y="1.5" width="15" height="15" rx="1.5" fill="none" stroke="#ffffff" stroke-width="1.6"/></svg>
<svg style="left:1620px;top:18px;" width="18" height="18" viewBox="0 0 18 18"><path d="M1.5 1.5 L16.5 16.5 M16.5 1.5 L1.5 16.5" stroke="#ffffff" stroke-width="1.6"/></svg>
<div class="t" style="left:25.38px;top:67.07px;font-size:20px;color:#444444;transform:scaleX(1.0101);transform-origin:0 0;">File</div>
<div class="t" style="left:102.15px;top:67.07px;font-size:20px;color:#383838;transform:scaleX(1.0965);transform-origin:0 0;-webkit-text-stroke:0.3px #383838;">Home</div>
<div class="t" style="left:198.85px;top:67.07px;font-size:20px;color:#444444;transform:scaleX(0.9730);transform-origin:0 0;">Insert</div>
<div class="t" style="left:291.29px;top:67.07px;font-size:20px;color:#444444;transform:scaleX(0.9430);transform-origin:0 0;">Page Layout</div>
<div class="t" style="left:439.94px;top:67.07px;font-size:20px;color:#444444;transform:scaleX(0.9766);transform-origin:0 0;">Formulas</div>
<div class="t" style="left:561.44px;top:67.07px;font-size:20px;color:#444444;transform:scaleX(0.9754);transform-origin:0 0;">Data</div>
<div class="t" style="left:642.31px;top:67.07px;font-size:20px;color:#444444;transform:scaleX(0.9281);transform-origin:0 0;">Review</div>
<div class="t" style="left:745.40px;top:67.07px;font-size:20px;color:#444444;transform:scaleX(0.9534);transform-origin:0 0;">View</div>
<div class="t" style="left:827.10px;top:67.07px;font-size:20px;color:#444444;">Developer</div>
<div class="t" style="left:959.06px;top:67.07px;font-size:20px;color:#444444;transform:scaleX(1.0233);transform-origin:0 0;">Help</div>
<div class="ab" style="left:103px;top:90px;width:57px;height:5px;background:#217346"></div>
<div class="ab" style="left:1546px;top:57px;width:100px;height:36px;background:#fff;border:1px solid #e1dfdd;border-radius:4px"></div>
<svg style="left:1555px;top:66px;" width="20" height="20" viewBox="0 0 20 20"><path d="M1.5 7 V18 H15 V13" fill="none" stroke="#217346" stroke-width="1.5"/><path d="M5 14 C5 8 9 6 14 6 V2 L19 7.5 L14 12.5 V9 C10 9 7 10 5 14 Z" fill="none" stroke="#217346" stroke-width="1.5" stroke-linejoin="round"/></svg>
<div class="t" style="left:1581.23px;top:67.11px;font-size:19px;color:#217346;font-weight:bold;transform:scaleX(0.9515);transform-origin:0 0;">Share</div>
<div class="ab" style="left:143px;top:103px;width:1px;height:132px;background:#c8c6c4"></div>
<div class="ab" style="left:471px;top:103px;width:1px;height:132px;background:#c8c6c4"></div>
<div class="ab" style="left:733px;top:103px;width:1px;height:132px;background:#c8c6c4"></div>
<div class="ab" style="left:954px;top:103px;width:1px;height:132px;background:#c8c6c4"></div>
<div class="ab" style="left:1245px;top:103px;width:1px;height:132px;background:#c8c6c4"></div>
<div class="ab" style="left:1384px;top:103px;width:1px;height:132px;background:#c8c6c4"></div>
<div class="ab" style="left:1596px;top:103px;width:1px;height:132px;background:#c8c6c4"></div>
<div class="t" style="left:25.18px;top:222.05px;font-size:16px;color:#444444;transform:scaleX(1.0195);transform-origin:0 0;">Clipboard</div>
<svg style="left:126px;top:222px;" width="13" height="13" viewBox="0 0 13 13"><path d="M1 1 H11 V11" fill="none" stroke="#605e5c" stroke-width="0" /><path d="M1 11 V1 H9" fill="none" stroke="#605e5c" stroke-width="1.4"/><path d="M4 4 L11 11 M11 6 V11 H6" fill="none" stroke="#605e5c" stroke-width="1.4"/></svg>
<div class="t" style="left:279.52px;top:222.45px;font-size:16px;color:#444444;transform:scaleX(0.9869);transform-origin:0 0;">Font</div>
<svg style="left:454px;top:222px;" width="13" height="13" viewBox="0 0 13 13"><path d="M1 1 H11 V11" fill="none" stroke="#605e5c" stroke-width="0" /><path d="M1 11 V1 H9" fill="none" stroke="#605e5c" stroke-width="1.4"/><path d="M4 4 L11 11 M11 6 V11 H6" fill="none" stroke="#605e5c" stroke-width="1.4"/></svg>
<div class="t" style="left:554.90px;top:221.95px;font-size:16px;color:#444444;">Alignment</div>
<svg style="left:716px;top:222px;" width="13" height="13" viewBox="0 0 13 13"><path d="M1 1 H11 V11" fill="none" stroke="#605e5c" stroke-width="0" /><path d="M1 11 V1 H9" fill="none" stroke="#605e5c" stroke-width="1.4"/><path d="M4 4 L11 11 M11 6 V11 H6" fill="none" stroke="#605e5c" stroke-width="1.4"/></svg>
<div class="t" style="left:802.17px;top:222.15px;font-size:16px;color:#444444;transform:scaleX(1.0217);transform-origin:0 0;">Number</div>
<svg style="left:937px;top:222px;" width="13" height="13" viewBox="0 0 13 13"><path d="M1 1 H11 V11" fill="none" stroke="#605e5c" stroke-width="0" /><path d="M1 11 V1 H9" fill="none" stroke="#605e5c" stroke-width="1.4"/><path d="M4 4 L11 11 M11 6 V11 H6" fill="none" stroke="#605e5c" stroke-width="1.4"/></svg>
<div class="t" style="left:1080.27px;top:222.05px;font-size:16px;color:#444444;transform:scaleX(0.8983);transform-origin:0 0;">Styles</div>
<div class="t" style="left:1297.76px;top:222.05px;font-size:16px;color:#444444;transform:scaleX(0.9211);transform-origin:0 0;">Cells</div>
<div class="t" style="left:1465.39px;top:221.85px;font-size:16px;color:#444444;transform:scaleX(1.0064);transform-origin:0 0;">Editing</div>
<svg style="left:1636px;top:226px;" width="17" height="11" viewBox="0 0 17 11"><path d="M1.5 9.5 L8.5 2 L15.5 9.5" fill="none" stroke="#444" stroke-width="1.5"/></svg>
<svg style="left:20px;top:100px;" width="60" height="60" viewBox="0 0 60 60"><rect x="9.7" y="16" width="29.2" height="33.7" fill="#ececec" stroke="#b3b3b3" stroke-width="2.2"/>
<path d="M15.5 21 V14 H20 A4.3 4.3 0 0 1 28.5 14 H33 V21 Z" fill="#ececec" stroke="#b3b3b3" stroke-width="2"/>
<rect x="29.3" y="28" width="19.5" height="24.8" fill="#efefef" stroke="#b3b3b3" stroke-width="2"/></svg>
<div class="t" style="left:23.63px;top:161.76px;font-size:18px;color:#a6a6a6;transform:scaleX(0.9153);transform-origin:0 0;">Paste</div>
<svg style="left:39px;top:189px;" width="12" height="8" viewBox="0 0 12 8"><path d="M1.9 1.8 L6 5.9 L10.1 1.8" fill="none" stroke="#a6a6a6" stroke-width="1.6"/></svg>
<svg style="left:82px;top:107px;" width="20" height="28" viewBox="0 0 20 28"><path d="M5 1 L13 19 M15 1 L7 19" stroke="#333" stroke-width="1.3"/><circle cx="5.5" cy="22.5" r="3.2" fill="none" stroke="#1a86d0" stroke-width="1.8"/><circle cx="14.5" cy="22.5" r="3.2" fill="none" stroke="#1a86d0" stroke-width="1.8"/></svg>
<svg style="left:79px;top:144px;" width="26" height="27" viewBox="0 0 26 27"><path d="M7 22 H2 V1.5 H10 L12 3.5" fill="none" stroke="#333" stroke-width="1.5"/><path d="M8 6.5 H18 L24 12.5 V25 H8 Z" fill="#fff" stroke="#333" stroke-width="1.5"/><path d="M18 6.5 V12.5 H24 M12 17 H20 M12 21 H20" fill="none" stroke="#333" stroke-width="1.3"/></svg>
<svg style="left:112px;top:154px;" width="12" height="8" viewBox="0 0 12 8"><path d="M1.9 1.8 L6 5.9 L10.1 1.8" fill="none" stroke="#444444" stroke-width="1.6"/></svg>
<svg style="left:76px;top:178px;" width="32" height="30" viewBox="0 0 32 30"><path d="M4.5 14 L14 8.5 L22.5 17.5 L15 25.5 Z" fill="#fff" stroke="#d9700b" stroke-width="1.8" stroke-linejoin="round"/>
<path d="M10 18.5 L19.5 21 L15 25.5 Z" fill="#fbd78f" stroke="#d9700b" stroke-width="1.2" stroke-linejoin="round"/>
<path d="M14 8.5 L18 5 L25.5 12.5 L22.5 17.5 Z" fill="#fff" stroke="#333" stroke-width="1.7" stroke-linejoin="round"/>
<path d="M20.5 7.5 L26 2 C27 1 28.5 2.5 27.5 3.5 L23 9" fill="#fff" stroke="#333" stroke-width="1.7" stroke-linejoin="round"/></svg>
<div class="ab" style="left:156px;top:116px;width:170px;height:35px;background:#fff;border:1px solid #c8c6c4"></div>
<div class="t" style="left:158.50px;top:124.57px;font-size:20px;color:#353433;transform:scaleX(0.9024);transform-origin:0 0;">Calibri</div>
<svg style="left:311px;top:130px;" width="12" height="8" viewBox="0 0 12 8"><path d="M1.9 1.8 L6 5.9 L10.1 1.8" fill="none" stroke="#444444" stroke-width="1.6"/></svg>
<div class="ab" style="left:328px;top:116px;width:64px;height:35px;background:#fff;border:1px solid #c8c6c4"></div>
<div class="t" style="left:330.61px;top:124.57px;font-size:20px;color:#353433;transform:scaleX(0.9290);transform-origin:0 0;">11</div>
<svg style="left:377px;top:130px;" width="12" height="8" viewBox="0 0 12 8"><path d="M1.9 1.8 L6 5.9 L10.1 1.8" fill="none" stroke="#444444" stroke-width="1.6"/></svg>
<div class="t" style="left:399.50px;top:117.49px;font-size:26px;color:#3b3b3b;transform:scaleX(0.9593);transform-origin:0 0;font-weight:300;">A</div>
<svg style="left:413.5px;top:117px;" width="10" height="8" viewBox="0 0 10 8"><path d="M1.5 6 L5 2.5 L8.5 6" fill="none" stroke="#1a86d0" stroke-width="1.5"/></svg>
<div class="t" style="left:436.00px;top:122.57px;font-size:20px;color:#3b3b3b;transform:scaleX(0.9774);transform-origin:0 0;">A</div>
<svg style="left:447.5px;top:117px;" width="10" height="8" viewBox="0 0 10 8"><path d="M1.5 2 L5 5.5 L8.5 2" fill="none" stroke="#1a86d0" stroke-width="1.5"/></svg>
<div class="ab" style="left:156px;top:165px;width:32px;height:34px;background:#c8c6c4;border:1px solid #a19f9d"></div>
<div class="t" style="left:165.02px;top:169.27px;font-size:20px;color:#333;font-weight:bold;transform:scaleX(0.9426);transform-origin:0 0;">B</div>
<div class="t" style="left:199.10px;top:168.42px;font-size:21px;color:#444;font-family:'Liberation Serif',serif;font-style:italic;">I</div>
<div class="t" style="left:230.47px;top:169.27px;font-size:20px;color:#333;transform:scaleX(1.1842);transform-origin:0 0;">U</div>
<div class="ab" style="left:232px;top:189px;width:14px;height:1.6px;background:#333"></div>
<svg style="left:260.5px;top:178px;" width="12" height="8" viewBox="0 0 12 8"><path d="M1.9 1.8 L6 5.9 L10.1 1.8" fill="none" stroke="#444444" stroke-width="1.6"/></svg>
<div class="ab" style="left:282px;top:166px;width:1px;height:32px;background:#c8c6c4"></div>
<svg style="left:290px;top:168px;" width="25" height="24" viewBox="0 0 25 24"><path d="M1.5 1.5 H22.5 V21 M1.5 1.5 V21 M12 1.5 V21 M1.5 11.5 H22.5" fill="none" stroke="#333" stroke-width="1.5" stroke-dasharray="1.4 2.1"/><path d="M1 22 H23" stroke="#333" stroke-width="2"/></svg>
<svg style="left:323.4px;top:178px;" width="12" height="8" viewBox="0 0 12 8"><path d="M1.9 1.8 L6 5.9 L10.1 1.8" fill="none" stroke="#444444" stroke-width="1.6"/></svg>
<div class="ab" style="left:345px;top:166px;width:1px;height:32px;background:#c8c6c4"></div>
<svg style="left:350px;top:165px;" width="32" height="32" viewBox="0 0 32 32"><path d="M7.8 14.4 L14.3 21 L22.3 13 M7.8 14.4 L15.2 7" fill="none" stroke="#333" stroke-width="1.6" stroke-linejoin="round"/><path d="M15 7.2 V5.2 A2 2 0 0 1 19 5.2 V13.2" fill="none" stroke="#333" stroke-width="1.6"/><path d="M21 9.2 C24 8.8 25.5 12.5 24 17.5" fill="none" stroke="#1a6cc0" stroke-width="2.6"/><rect x="4.5" y="22.5" width="23" height="5" fill="#fff" stroke="#999" stroke-width="1"/></svg>
<svg style="left:386.4px;top:178px;" width="12" height="8" viewBox="0 0 12 8"><path d="M1.9 1.8 L6 5.9 L10.1 1.8" fill="none" stroke="#444444" stroke-width="1.6"/></svg>
<div class="t" style="left:415.40px;top:167.02px;font-size:21px;color:#333;transform:scaleX(1.0072);transform-origin:0 0;">A</div>
<div class="ab" style="left:410px;top:187px;width:24px;height:6px;background:#ff0000"></div>
<svg style="left:442.2px;top:178px;" width="12" height="8" viewBox="0 0 12 8"><path d="M1.9 1.8 L6 5.9 L10.1 1.8" fill="none" stroke="#444444" stroke-width="1.6"/></svg>
<div class="ab" style="left:518px;top:117px;width:32px;height:34px;background:#c8c6c4;border:1px solid #a19f9d"></div>
<div class="ab" style="left:518px;top:165px;width:32px;height:34px;background:#c8c6c4;border:1px solid #a19f9d"></div>
<svg style="left:489px;top:115px;" width="30" height="30" viewBox="0 0 30 30"><path d="M0 6.4 H21.5" stroke="#3b3b3b" stroke-width="1.6"/><path d="M3.4 12.8 H18" stroke="#3b3b3b" stroke-width="1.6"/><path d="M0 19 H21.5" stroke="#3b3b3b" stroke-width="1.6"/></svg>
<svg style="left:523.5px;top:115px;" width="30" height="30" viewBox="0 0 30 30"><path d="M0 11.1 H21.5" stroke="#3b3b3b" stroke-width="1.6"/><path d="M3 17 H18.5" stroke="#3b3b3b" stroke-width="1.6"/><path d="M0 23.2 H21.5" stroke="#3b3b3b" stroke-width="1.6"/></svg>
<svg style="left:557.4px;top:115px;" width="30" height="30" viewBox="0 0 30 30"><path d="M0 16.1 H21.5" stroke="#3b3b3b" stroke-width="1.6"/><path d="M3.4 22.5 H18" stroke="#3b3b3b" stroke-width="1.6"/><path d="M0 29 H21.5" stroke="#3b3b3b" stroke-width="1.6"/></svg>
<svg style="left:489px;top:165px;" width="30" height="30" viewBox="0 0 30 30"><path d="M0 6.1 H21.5" stroke="#3b3b3b" stroke-width="1.6"/><path d="M0 12.4 H15" stroke="#3b3b3b" stroke-width="1.6"/><path d="M0 17.9 H21.5" stroke="#3b3b3b" stroke-width="1.6"/><path d="M0 24.1 H15" stroke="#3b3b3b" stroke-width="1.6"/></svg>
<svg style="left:523.5px;top:165px;" width="30" height="30" viewBox="0 0 30 30"><path d="M0 6.1 H21.5" stroke="#3b3b3b" stroke-width="1.6"/><path d="M3 12.4 H18.5" stroke="#3b3b3b" stroke-width="1.6"/><path d="M0 17.9 H21.5" stroke="#3b3b3b" stroke-width="1.6"/><path d="M3 24.1 H18.5" stroke="#3b3b3b" stroke-width="1.6"/></svg>
<svg style="left:557.4px;top:165px;" width="30" height="30" viewBox="0 0 30 30"><path d="M0 6.1 H21.5" stroke="#3b3b3b" stroke-width="1.6"/><path d="M6.5 12.4 H21.5" stroke="#3b3b3b" stroke-width="1.6"/><path d="M0 17.9 H21.5" stroke="#3b3b3b" stroke-width="1.6"/><path d="M6.5 24.1 H21.5" stroke="#3b3b3b" stroke-width="1.6"/></svg>
<svg style="left:592px;top:165px;" width="24" height="28" viewBox="0 0 24 28"><path d="M0.5 6.1 H21.5 M13 12.4 H21.5 M13 17.9 H21.5 M0.5 24.1 H21.5" stroke="#3b3b3b" stroke-width="1.6"/><path d="M11 15.2 H2 M6 11.2 L2 15.2 L6 19.2" fill="none" stroke="#1a86d0" stroke-width="1.6"/></svg>
<svg style="left:626px;top:165px;" width="24" height="28" viewBox="0 0 24 28"><path d="M0.5 6.1 H21.5 M13 12.4 H21.5 M13 17.9 H21.5 M0.5 24.1 H21.5" stroke="#3b3b3b" stroke-width="1.6"/><path d="M0.5 15.2 H9.5 M5.5 11.2 L9.5 15.2 L5.5 19.2" fill="none" stroke="#1a86d0" stroke-width="1.6"/></svg>
<svg style="left:590px;top:118px;" width="30" height="28" viewBox="0 0 30 28"><text x="0" y="0" transform="translate(5.5,21) rotate(-45)" font-family="Liberation Sans" font-size="15" fill="#3b3b3b">ab</text><path d="M8 26 L24 10 M18 10 H24 V16" fill="none" stroke="#1a86d0" stroke-width="1.6"/></svg>
<svg style="left:619px;top:130px;" width="12" height="8" viewBox="0 0 12 8"><path d="M1.9 1.8 L6 5.9 L10.1 1.8" fill="none" stroke="#444444" stroke-width="1.6"/></svg>
<div class="ab" style="left:659px;top:112px;width:1px;height:91px;background:#c8c6c4"></div>
<svg style="left:670px;top:118px;" width="26" height="30" viewBox="0 0 26 30"><text x="3" y="13" font-family="Liberation Sans" font-size="14.5" fill="#3b3b3b">ab</text><text x="3" y="24.5" font-family="Liberation Sans" font-size="14.5" fill="#3b3b3b">c</text><path d="M20 14 C25 14 25 22 20 22 H13 M16 18.5 L12.5 22 L16 25.5" fill="none" stroke="#1a86d0" stroke-width="1.6"/></svg>
<svg style="left:669px;top:168px;" width="26" height="26" viewBox="0 0 26 26"><rect x="1.5" y="1.5" width="21" height="21" fill="#fff" stroke="#3b3b3b" stroke-width="1.6"/><path d="M12 1.5 V5 M12 19 V22.5" stroke="#3b3b3b" stroke-width="1.5"/><rect x="1.5" y="5" width="21" height="13.5" fill="#fff" stroke="#1a86d0" stroke-width="1.6"/><path d="M5 11.8 H19 M8 8.5 L4.8 11.8 L8 15 M16 8.5 L19.2 11.8 L16 15" fill="none" stroke="#1a86d0" stroke-width="1.5"/></svg>
<svg style="left:702px;top:178px;" width="12" height="8" viewBox="0 0 12 8"><path d="M1.9 1.8 L6 5.9 L10.1 1.8" fill="none" stroke="#444444" stroke-width="1.6"/></svg>
<div class="ab" style="left:746px;top:116px;width:197px;height:35px;background:#fff;border:1px solid #c8c6c4"></div>
<div class="t" style="left:748.76px;top:124.07px;font-size:20px;color:#353433;transform:scaleX(0.8430);transform-origin:0 0;">General</div>
<svg style="left:928px;top:130.4px;" width="12" height="8" viewBox="0 0 12 8"><path d="M1.9 1.8 L6 5.9 L10.1 1.8" fill="none" stroke="#444444" stroke-width="1.6"/></svg>
<div class="t" style="left:755.46px;top:168.49px;font-size:26px;color:#444;transform:scaleX(0.8029);transform-origin:0 0;">$</div>
<svg style="left:782.4px;top:178.5px;" width="12" height="8" viewBox="0 0 12 8"><path d="M1.9 1.8 L6 5.9 L10.1 1.8" fill="none" stroke="#444444" stroke-width="1.6"/></svg>
<div class="t" style="left:805.83px;top:170.63px;font-size:25px;color:#444;transform:scaleX(1.0784);transform-origin:0 0;">%</div>
<svg style="left:845px;top:171px;" width="16" height="22" viewBox="0 0 16 22"><path d="M7 2 C11.5 1 13.5 5 12.5 9 C11.5 14 8 17 3 19.5 L2.5 18.5 C5.5 16.5 7.5 14 7.8 11.5 C5 11.5 3.2 9.8 3.2 7 C3.2 4 5 2.5 7 2 Z" fill="#333"/></svg>
<div class="ab" style="left:872px;top:166px;width:1px;height:32px;background:#c8c6c4"></div>
<svg style="left:0;top:0" width="960" height="200"><g font-family="Liberation Sans" font-size="14" fill="#333">
<text x="893.5" y="179.2" textLength="10.5" lengthAdjust="spacingAndGlyphs">.0</text>
<text x="886.5" y="191.4" textLength="17.5" lengthAdjust="spacingAndGlyphs">.00</text>
<text x="920.1" y="179.2" textLength="17.5" lengthAdjust="spacingAndGlyphs">.00</text>
<text x="927.1" y="191.4" textLength="10.5" lengthAdjust="spacingAndGlyphs">.0</text></g>
<path d="M894.5 175.6 H882 M886.2 171.4 L882 175.6 L886.2 179.8" fill="none" stroke="#1a86d0" stroke-width="1.6"/>
<path d="M915 186.2 H928 M923.8 182 L928 186.2 L923.8 190.4" fill="none" stroke="#1a86d0" stroke-width="1.6"/></svg>
<svg style="left:1000px;top:112px;" width="46" height="36" viewBox="0 0 46 36"><rect x="2" y="1.5" width="41.5" height="32.5" fill="#fff" stroke="#444" stroke-width="1.6"/>
<path d="M9.5 1.5 V34 M28.5 1.5 V34 M36 1.5 V34 M2 12.5 H43.5 M2 23.5 H43.5" stroke="#444" stroke-width="1.3"/>
<rect x="9.5" y="1.5" width="19" height="11" fill="#f4989a" stroke="#d4252a" stroke-width="1.5"/>
<rect x="9.5" y="12.5" width="13" height="11" fill="#86bce9" stroke="#1e6fbf" stroke-width="1.5"/>
<rect x="9.5" y="23.5" width="22" height="10.5" fill="#f4989a" stroke="#d4252a" stroke-width="1.5"/></svg>
<div class="t" style="left:976.47px;top:161.26px;font-size:18px;color:#353433;transform:scaleX(1.0295);transform-origin:0 0;">Conditional</div>
<div class="t" style="left:969.14px;top:185.16px;font-size:18px;color:#353433;transform:scaleX(1.0408);transform-origin:0 0;">Formatting</div>
<svg style="left:1062.5px;top:189.5px;" width="12" height="8" viewBox="0 0 12 8"><path d="M1.9 1.8 L6 5.9 L10.1 1.8" fill="none" stroke="#444444" stroke-width="1.6"/></svg>
<svg style="left:1099px;top:112px;" width="50" height="44" viewBox="0 0 50 44"><rect x="2" y="1.5" width="41.5" height="32.5" fill="#fff" stroke="#444" stroke-width="1.6"/>
<path d="M15.5 1.5 V34 M28.5 1.5 V34 M2 12.5 H43.5 M2 23.5 H43.5" stroke="#444" stroke-width="1.3"/>
<rect x="15.5" y="12.5" width="28" height="21.5" fill="#86bce9" stroke="#1e6fbf" stroke-width="1.5"/>
<path d="M15.5 12.5 V34 M28.5 12.5 V34 M15.5 23.5 H43.5" stroke="#1e6fbf" stroke-width="1.2"/>
<path d="M27 33 L44 10 C46 8 48 9 47 12 L31 36" fill="#fff" stroke="#444" stroke-width="1.6"/>
<path d="M22 36 C26 30 32 30 32 36 C31 41 25 42 19 42 C22 40 21 38 22 36 Z" fill="#5ea3e0" stroke="#1e6fbf" stroke-width="1.6"/></svg>
<div class="t" style="left:1081.34px;top:161.26px;font-size:18px;color:#353433;transform:scaleX(0.9759);transform-origin:0 0;">Format as</div>
<div class="t" style="left:1093.62px;top:185.16px;font-size:18px;color:#353433;transform:scaleX(0.9569);transform-origin:0 0;">Table</div>
<svg style="left:1137.6px;top:189.5px;" width="12" height="8" viewBox="0 0 12 8"><path d="M1.9 1.8 L6 5.9 L10.1 1.8" fill="none" stroke="#444444" stroke-width="1.6"/></svg>
<svg style="left:1176px;top:112px;" width="50" height="44" viewBox="0 0 50 44"><rect x="2" y="1.5" width="41.5" height="32.5" fill="#fff" stroke="#444" stroke-width="1.6"/>
<path d="M9.5 1.5 V34 M36 1.5 V12.5 M2 8 H43.5 M2 27 H9.5" stroke="#444" stroke-width="1.3"/>
<rect x="9.5" y="8" width="26.5" height="19" fill="#86bce9" stroke="#1e6fbf" stroke-width="1.6"/>
<path d="M27 33 L44 10 C46 8 48 9 47 12 L31 36" fill="#fff" stroke="#444" stroke-width="1.6"/>
<path d="M22 36 C26 30 32 30 32 36 C31 41 25 42 19 42 C22 40 21 38 22 36 Z" fill="#5ea3e0" stroke="#1e6fbf" stroke-width="1.6"/></svg>
<div class="t" style="left:1184.66px;top:161.26px;font-size:18px;color:#353433;transform:scaleX(0.9343);transform-origin:0 0;">Cell</div>
<div class="t" style="left:1167.66px;top:185.16px;font-size:18px;color:#353433;transform:scaleX(0.9244);transform-origin:0 0;">Styles</div>
<svg style="left:1217.7px;top:189.5px;" width="12" height="8" viewBox="0 0 12 8"><path d="M1.9 1.8 L6 5.9 L10.1 1.8" fill="none" stroke="#444444" stroke-width="1.6"/></svg>
<svg style="left:1262px;top:107.2px;" width="26" height="23" viewBox="0 0 26 23"><rect x="1" y="1" width="23" height="20.5" fill="#fff" stroke="#3b3b3b" stroke-width="1.6"/>
<path d="M9 1 V21.5 M17 1 V21.5 M1 7 H24 M1 15 H24" stroke="#3b3b3b" stroke-width="1.3"/>
<rect x="0" y="7.5" width="9" height="7" fill="#fff"/>
<rect x="9" y="6.5" width="15" height="8.5" fill="#86bce9" stroke="#1e6fbf" stroke-width="1.6"/>
<path d="M17 6.5 V15" stroke="#1e6fbf" stroke-width="1.3"/>
<path d="M12.5 10.8 H1.5 M6 6 L1.3 10.8 L6 15.6" fill="none" stroke="#1a86d0" stroke-width="1.6"/></svg>
<div class="t" style="left:1289.41px;top:109.91px;font-size:19px;color:#353433;transform:scaleX(0.9364);transform-origin:0 0;">Insert</div>
<svg style="left:1347.3px;top:115px;" width="12" height="8" viewBox="0 0 12 8"><path d="M1.9 1.8 L6 5.9 L10.1 1.8" fill="none" stroke="#444444" stroke-width="1.6"/></svg>
<svg style="left:1262px;top:141.7px;" width="26" height="23" viewBox="0 0 26 23"><rect x="1" y="1" width="23" height="20" fill="#fff" stroke="#3b3b3b" stroke-width="1.6"/>
<path d="M9 1 V21 M17 1 V21 M1 6.5 H24 M1 15 H24" stroke="#3b3b3b" stroke-width="1.3"/>
<rect x="0" y="7" width="25" height="7.5" fill="#fff"/>
<path d="M4.5 6.5 H13 L15 10.8 L13 15 H4.5 Z" fill="#86bce9" stroke="#1e6fbf" stroke-width="1.6"/>
<path d="M16.5 7 L23.5 14 M23.5 7 L16.5 14" stroke="#e81123" stroke-width="1.6"/></svg>
<div class="t" style="left:1289.81px;top:143.61px;font-size:19px;color:#353433;transform:scaleX(0.9259);transform-origin:0 0;">Delete</div>
<svg style="left:1353.1px;top:149px;" width="12" height="8" viewBox="0 0 12 8"><path d="M1.9 1.8 L6 5.9 L10.1 1.8" fill="none" stroke="#444444" stroke-width="1.6"/></svg>
<svg style="left:1262px;top:173.2px;" width="26" height="27" viewBox="0 0 26 27"><rect x="1" y="4.5" width="23" height="20" fill="#fff" stroke="#3b3b3b" stroke-width="1.6"/>
<path d="M7.5 4.5 V24.5 M17 4.5 V24.5 M1 10 H24 M1 19 H24" stroke="#3b3b3b" stroke-width="1.3"/>
<rect x="6.5" y="10" width="11.5" height="8.5" fill="#86bce9" stroke="#1e6fbf" stroke-width="1.6"/>
<path d="M4.5 1.5 H19.5 M4.5 -0.5 V3.5 M19.5 -0.5 V3.5" stroke="#1a86d0" stroke-width="1.3"/></svg>
<div class="t" style="left:1289.77px;top:177.81px;font-size:19px;color:#353433;transform:scaleX(0.9504);transform-origin:0 0;">Format</div>
<svg style="left:1351.2px;top:182.4px;" width="12" height="8" viewBox="0 0 12 8"><path d="M1.9 1.8 L6 5.9 L10.1 1.8" fill="none" stroke="#444444" stroke-width="1.6"/></svg>
<svg style="left:1402px;top:106px;" width="22" height="24" viewBox="0 0 22 24"><path d="M20 4 V1.5 H2.5 L11 11.5 L2.5 21.5 H20 V19" fill="none" stroke="#333" stroke-width="1.7"/></svg>
<svg style="left:1433.2px;top:115px;" width="12" height="8" viewBox="0 0 12 8"><path d="M1.9 1.8 L6 5.9 L10.1 1.8" fill="none" stroke="#444444" stroke-width="1.6"/></svg>
<svg style="left:1400px;top:140px;" width="27" height="24" viewBox="0 0 27 24"><rect x="1.5" y="1.5" width="23" height="20.5" fill="#fff" stroke="#333" stroke-width="1.7"/><path d="M1.5 5 H24.5" stroke="#333" stroke-width="1.4"/><path d="M13 8 V18 M9 14 L13 18 L17 14" fill="none" stroke="#1a86d0" stroke-width="1.6"/></svg>
<svg style="left:1429.3px;top:149.4px;" width="12" height="8" viewBox="0 0 12 8"><path d="M1.9 1.8 L6 5.9 L10.1 1.8" fill="none" stroke="#444444" stroke-width="1.6"/></svg>
<svg style="left:1400px;top:173px;" width="26" height="26" viewBox="0 0 26 26"><path d="M1.7 16 L15.6 2.1 L23.8 9.8 L9.4 23.8 Z" fill="#fafafa" stroke="#a43fb3" stroke-width="1.7" stroke-linejoin="miter"/><path d="M1.7 16 L7.4 10.3 L15 17.9 L9.4 23.8 Z" fill="#d8a3df" stroke="#a43fb3" stroke-width="1.7"/></svg>
<svg style="left:1429.3px;top:183.7px;" width="12" height="8" viewBox="0 0 12 8"><path d="M1.9 1.8 L6 5.9 L10.1 1.8" fill="none" stroke="#444444" stroke-width="1.6"/></svg>
<div class="t" style="left:1463.51px;top:108.18px;font-size:24px;color:#1a86d0;transform:scaleX(0.8805);transform-origin:0 0;">A</div>
<div class="t" style="left:1462.45px;top:130.97px;font-size:22px;color:#333;transform:scaleX(1.0744);transform-origin:0 0;">Z</div>
<svg style="left:1480px;top:118px;" width="27" height="28" viewBox="0 0 27 28"><path d="M2 2 H24 V6 L16.5 14 V24.5 H10.5 V14 L3 6 Z" fill="#fafafa" stroke="#333" stroke-width="1.6" stroke-linejoin="miter"/></svg>
<div class="t" style="left:1457.15px;top:161.46px;font-size:18px;color:#353433;transform:scaleX(1.0634);transform-origin:0 0;">Sort &amp;</div>
<div class="t" style="left:1455.57px;top:185.16px;font-size:18px;color:#353433;transform:scaleX(0.9503);transform-origin:0 0;">Filter</div>
<svg style="left:1498px;top:189.5px;" width="12" height="8" viewBox="0 0 12 8"><path d="M1.9 1.8 L6 5.9 L10.1 1.8" fill="none" stroke="#444444" stroke-width="1.6"/></svg>
<svg style="left:1525px;top:106px;" width="50" height="50" viewBox="0 0 50 50"><circle cx="30" cy="18.5" r="15" fill="#fff" stroke="#333" stroke-width="1.7"/><path d="M19.5 29 L2.5 46" stroke="#333" stroke-width="1.7"/></svg>
<div class="t" style="left:1522.35px;top:161.46px;font-size:18px;color:#353433;transform:scaleX(1.0319);transform-origin:0 0;">Find &amp;</div>
<div class="t" style="left:1517.96px;top:185.16px;font-size:18px;color:#353433;transform:scaleX(0.9226);transform-origin:0 0;">Select</div>
<svg style="left:1568px;top:189.5px;" width="12" height="8" viewBox="0 0 12 8"><path d="M1.9 1.8 L6 5.9 L10.1 1.8" fill="none" stroke="#444444" stroke-width="1.6"/></svg>
<div class="ab" style="left:9px;top:257px;width:152px;height:35px;background:#fff;border:1px solid #c8c6c4"></div>
<div class="t" style="left:16.00px;top:265.57px;font-size:20px;color:#353433;transform:scaleX(1.0213);transform-origin:0 0;">A1</div>
<svg style="left:140px;top:270px;" width="12" height="8" viewBox="0 0 12 8"><path d="M1 1.5 H11 L6 6.5 Z" fill="#555"/></svg>
<div class="ab" style="left:181px;top:267px;width:3px;height:3px;background:#a6a6a6;border-radius:1px"></div>
<div class="ab" style="left:181px;top:273px;width:3px;height:3px;background:#a6a6a6;border-radius:1px"></div>
<div class="ab" style="left:181px;top:279px;width:3px;height:3px;background:#a6a6a6;border-radius:1px"></div>
<div class="ab" style="left:206px;top:257px;width:164px;height:35px;background:#fff;border:1px solid #c8c6c4"></div>
<svg style="left:224px;top:265px;" width="19" height="19" viewBox="0 0 19 19"><path d="M2 2 L17 17 M17 2 L2 17" stroke="#bdbdbd" stroke-width="1.8"/></svg>
<svg style="left:278px;top:265px;" width="22" height="19" viewBox="0 0 22 19"><path d="M2 10 L8 16 L20 3" fill="none" stroke="#c8c8c8" stroke-width="3"/></svg>
<div class="t" style="left:329px;top:261px;font-size:25px;color:#444;font-family:'Liberation Serif',serif;font-style:italic;">f</div>
<div class="t" style="left:339.5px;top:268px;font-size:19px;color:#444;font-family:'Liberation Serif',serif;font-style:italic;">x</div>
<div class="ab" style="left:374px;top:257px;width:1283px;height:35px;background:#fff;border:1px solid #c8c6c4"></div>
<div class="t" style="left:390.04px;top:265.57px;font-size:20px;color:#353433;transform:scaleX(1.0714);transform-origin:0 0;">S/N</div>
<svg style="left:1637px;top:270px;" width="14" height="9" viewBox="0 0 14 9"><path d="M1.5 1.5 L7 7 L12.5 1.5" fill="none" stroke="#555" stroke-width="2"/></svg>
<div class="ab" style="left:1636px;top:307px;width:28px;height:644px;background:#e6e6e6"></div>
<div class="ab" style="left:1636px;top:308px;width:25px;height:24px;background:#fff;border:1px solid #8f8f8f"></div>
<svg style="left:1643px;top:316px;" width="12" height="8" viewBox="0 0 12 8"><path d="M1 6.5 L6 1.5 L11 6.5 Z" fill="#777"/></svg>
<div class="ab" style="left:1636px;top:333px;width:25px;height:296px;background:#fff;border:1px solid #8f8f8f"></div>
<div class="ab" style="left:1636px;top:928px;width:25px;height:24px;background:#fff;border:1px solid #8f8f8f"></div>
<svg style="left:1643px;top:936px;" width="12" height="8" viewBox="0 0 12 8"><path d="M1 1.5 L6 6.5 L11 1.5 Z" fill="#777"/></svg>
<div class="ab" style="left:2px;top:951px;width:1662px;height:34px;background:#e6e6e6;border-top:1px solid #9d9d9d"></div>
<svg style="left:28px;top:960px;" width="12" height="14" viewBox="0 0 12 14"><path d="M9 1 L3 7 L9 13 Z" fill="#c4c4c4"/></svg>
<svg style="left:62px;top:960px;" width="12" height="14" viewBox="0 0 12 14"><path d="M3 1 L9 7 L3 13 Z" fill="#c4c4c4"/></svg>
<div class="ab" style="left:120px;top:951px;width:90px;height:31px;background:#fff;border-left:1px solid #bdbdbd;border-right:1px solid #bdbdbd"></div>
<div class="ab" style="left:120px;top:979px;width:90px;height:3px;background:#217346"></div>
<div class="t" style="left:131.91px;top:955.97px;font-size:20px;color:#217346;font-weight:bold;transform:scaleX(0.9798);transform-origin:0 0;">Sheet1</div>
<div class="t" style="left:222.44px;top:955.97px;font-size:20px;color:#444;transform:scaleX(0.9561);transform-origin:0 0;">Sheet2</div>
<div class="ab" style="left:297px;top:956px;width:1px;height:25px;background:#bdbdbd"></div>
<svg style="left:336px;top:956px;" width="24" height="24" viewBox="0 0 24 24"><circle cx="12" cy="12" r="10.5" fill="none" stroke="#777" stroke-width="1.5"/><path d="M12 6.5 V17.5 M6.5 12 H17.5" stroke="#777" stroke-width="1.5"/></svg>
<div class="ab" style="left:996px;top:961px;width:3px;height:3px;background:#b5b5b5"></div>
<div class="ab" style="left:996px;top:967px;width:3px;height:3px;background:#b5b5b5"></div>
<div class="ab" style="left:996px;top:973px;width:3px;height:3px;background:#b5b5b5"></div>
<div class="ab" style="left:1016px;top:955px;width:618px;height:25px;background:#dcdcdc;border:1px solid #8f8f8f"></div>
<div class="ab" style="left:1016px;top:955px;width:26px;height:25px;background:#fff;border:1px solid #8f8f8f"></div>
<svg style="left:1024px;top:961px;" width="10" height="13" viewBox="0 0 10 13"><path d="M8 1 L2 6.5 L8 12 Z" fill="#555"/></svg>
<div class="ab" style="left:1041px;top:955px;width:497px;height:25px;background:#fff;border:1px solid #8f8f8f"></div>
<div class="ab" style="left:1610px;top:955px;width:24px;height:25px;background:#fff;border:1px solid #8f8f8f"></div>
<svg style="left:1617px;top:961px;" width="10" height="13" viewBox="0 0 10 13"><path d="M2 1 L8 6.5 L2 12 Z" fill="#555"/></svg>
<div class="ab" style="left:2px;top:985px;width:1662px;height:32px;background:#f3f2f1;border-top:1px solid #c8c8c8"></div>
<div class="t" style="left:12.69px;top:994.85px;font-size:16px;color:#505050;transform:scaleX(0.9289);transform-origin:0 0;">Ready</div>
<svg style="left:82px;top:992px;" width="24" height="21" viewBox="0 0 24 21"><path d="M1 1.5 H22 M1 1.5 V19 H10" fill="none" stroke="#505050" stroke-width="1.5"/><path d="M1 5 H22 V9" fill="none" stroke="#505050" stroke-width="1.3"/><path d="M4 9 H8 M4 13 H8 M4 17 H8" stroke="#505050" stroke-width="1.4"/><circle cx="16" cy="14.5" r="5.5" fill="none" stroke="#505050" stroke-width="1.5"/><circle cx="16" cy="14.5" r="2.7" fill="#505050"/></svg>
<svg style="left:128px;top:988px;" width="26" height="26" viewBox="0 0 26 26"><circle cx="11.5" cy="5.8" r="3.1" fill="none" stroke="#505050" stroke-width="1.4"/><path d="M2.5 9.2 C6.5 11.8 15.5 11.8 20.5 8.5 L19.5 11.5 C17 12.8 15.2 13.5 14.6 15.5 M8.8 13.5 C8.5 16.5 7.5 20 6.5 23 C8.5 23.5 10.5 21.5 12 18.5 M2.5 9.2 L3.5 12 C5.5 12.8 7.5 13 8.8 13.5" fill="none" stroke="#505050" stroke-width="1.4" stroke-linejoin="round"/><path d="M14.2 14.5 L23 23.5 M23 14.5 L14.2 23.5" stroke="#505050" stroke-width="1.4"/></svg>
<div class="t" style="left:158.00px;top:994.85px;font-size:16px;color:#505050;transform:scaleX(0.9519);transform-origin:0 0;">Accessibility: Investigate</div>
<div class="t" style="left:792.90px;top:994.95px;font-size:16px;color:#505050;transform:scaleX(0.9762);transform-origin:0 0;">Average: 114957.1804</div>
<div class="t" style="left:970.71px;top:994.95px;font-size:16px;color:#505050;transform:scaleX(0.9868);transform-origin:0 0;">Count: 60</div>
<div class="t" style="left:1059.91px;top:994.95px;font-size:16px;color:#505050;transform:scaleX(0.9810);transform-origin:0 0;">Sum: 5288030.3</div>
<div class="ab" style="left:1202px;top:986px;width:59px;height:31px;background:#d6d6d6"></div>
<svg style="left:1220px;top:990px;" width="22" height="22" viewBox="0 0 22 22"><path d="M1.5 1.5 H20.5 V20.5 H1.5 Z M1.5 7.8 H20.5 M1.5 14.2 H20.5 M7.8 1.5 V20.5 M14.2 1.5 V20.5" fill="none" stroke="#505050" stroke-width="1.4"/></svg>
<svg style="left:1281px;top:991px;" width="22" height="22" viewBox="0 0 22 22"><rect x="1.5" y="1.5" width="19" height="18" fill="none" stroke="#505050" stroke-width="1.5"/><rect x="5.5" y="5" width="11" height="11" fill="none" stroke="#505050" stroke-width="1.3"/><path d="M8 8 H14 M8 10.5 H14 M8 13 H14" stroke="#505050" stroke-width="1"/></svg>
<svg style="left:1341px;top:990px;" width="22" height="22" viewBox="0 0 22 22"><path d="M1.5 20 V1.5 H20.5 V20 M9 1.5 V12 H15 V1.5" fill="none" stroke="#505050" stroke-width="1.5"/></svg>
<div class="ab" style="left:1390px;top:1000px;width:11px;height:1.5px;background:#505050"></div>
<div class="ab" style="left:1410px;top:1000px;width:148px;height:1.5px;background:#6a6a6a"></div>
<div class="ab" style="left:1483px;top:995px;width:1.5px;height:12px;background:#6a6a6a"></div>
<div class="ab" style="left:1502px;top:993px;width:8px;height:16px;background:#7a7a7a"></div>
<div class="ab" style="left:1566px;top:1000px;width:11px;height:1.5px;background:#505050"></div>
<div class="ab" style="left:1570.75px;top:995.5px;width:1.5px;height:11px;background:#505050"></div>
<div class="t" style="left:1595.42px;top:994.95px;font-size:16px;color:#505050;transform:scaleX(0.9796);transform-origin:0 0;">190%</div>
</body></html>
